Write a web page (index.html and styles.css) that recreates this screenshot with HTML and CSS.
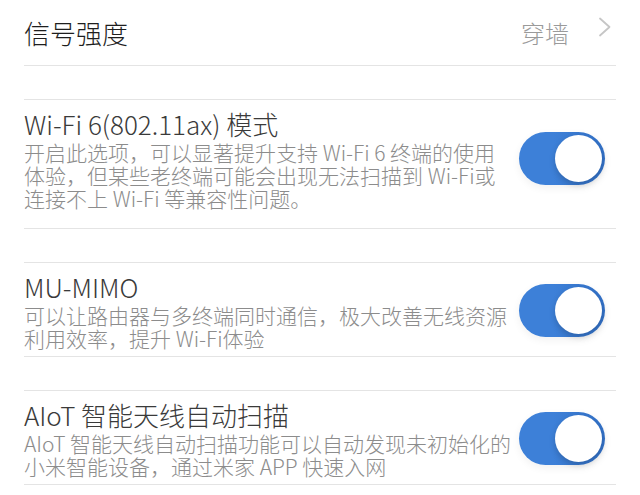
FILE: index.html
```html
<!DOCTYPE html>
<html lang="zh-CN">
<head>
    <meta charset="UTF-8">
    <meta name="viewport" content="width=device-width, initial-scale=1.0">
    <title>Wi-Fi 设置</title>
    <link rel="stylesheet" href="styles.css">
</head>
<body>

    <div class="settings">
        <div class="row nav-row">
            <span class="row-title">信号强度</span>
            <span class="nav-value">穿墙</span>
            <svg class="chevron" width="14" height="20" viewBox="0 0 14 20">
                <polyline points="2,1.5 11.5,10 2,18.5" fill="none" stroke="#c6c6c6" stroke-width="1.8" stroke-linejoin="round" stroke-linecap="round"/>
            </svg>
        </div>

        <div class="gap"></div>

        <div class="row switch-row tall">
            <div class="row-text">
                <div class="row-title">Wi-Fi 6(802.11ax) 模式</div>
                <div class="row-desc">开启此选项，可以显著提升支持 Wi-Fi 6 终端的使用<br>体验，但某些老终端可能会出现无法扫描到 Wi-Fi或<br>连接不上 Wi-Fi 等兼容性问题。</div>
            </div>
            <div class="switch on"><span class="knob"></span></div>
        </div>

        <div class="gap"></div>

        <div class="row switch-row">
            <div class="row-text">
                <div class="row-title">MU-MIMO</div>
                <div class="row-desc">可以让路由器与多终端同时通信，极大改善无线资源<br>利用效率，提升 Wi-Fi体验</div>
            </div>
            <div class="switch on"><span class="knob"></span></div>
        </div>

        <div class="gap"></div>

        <div class="row switch-row">
            <div class="row-text">
                <div class="row-title">AIoT 智能天线自动扫描</div>
                <div class="row-desc">AIoT 智能天线自动扫描功能可以自动发现未初始化的<br>小米智能设备，通过米家 APP 快速入网</div>
            </div>
            <div class="switch on"><span class="knob"></span></div>
        </div>
    </div>

</body>
</html>
```

FILE: styles.css
```css
body { margin: 0; padding: 0; background-color: #ffffff; font-family: "Noto Sans CJK SC", "Noto Sans", sans-serif; }
.settings { margin: 0 24px; }
.row { border-bottom: 1px solid #e4e4e4; box-sizing: border-box; }
.gap { height: 34px; border-bottom: 1px solid #e4e4e4; box-sizing: border-box; }
.nav-row { height: 66px; display: flex; align-items: center; }
.nav-row .row-title { flex: 1; font-size: 26px; color: #1e1e1e; }
.nav-value { font-size: 24px; color: #9a9a9a; font-weight: 300; }
.chevron { align-self: flex-start; margin: 17px 4px 0 29px; }
.switch-row { display: flex; align-items: center; padding: 7px 11px 6px 0; }
.switch-row.tall { padding-bottom: 18px; }
.row-text { flex: 1; }
.row-title { font-size: 26px; line-height: 34px; color: #3a3a3a; font-weight: 300; }
.row-desc { font-size: 21px; line-height: 23px; color: #8c8c8c; font-weight: 300; white-space: nowrap; }
.switch { width: 86px; height: 53px; border-radius: 27px; background: #c8c8c8; position: relative; flex-shrink: 0; margin-left: 6px; box-shadow: 0 3px 8px rgba(0,0,0,0.06); }
.switch.on { background: linear-gradient(to right, #3d80d8 40%, #3270c6); }
.knob { position: absolute; top: 3px; right: 3px; width: 47px; height: 47px; border-radius: 50%; background: #ffffff; box-shadow: 0 3px 6px rgba(0,0,0,0.18); }
```
